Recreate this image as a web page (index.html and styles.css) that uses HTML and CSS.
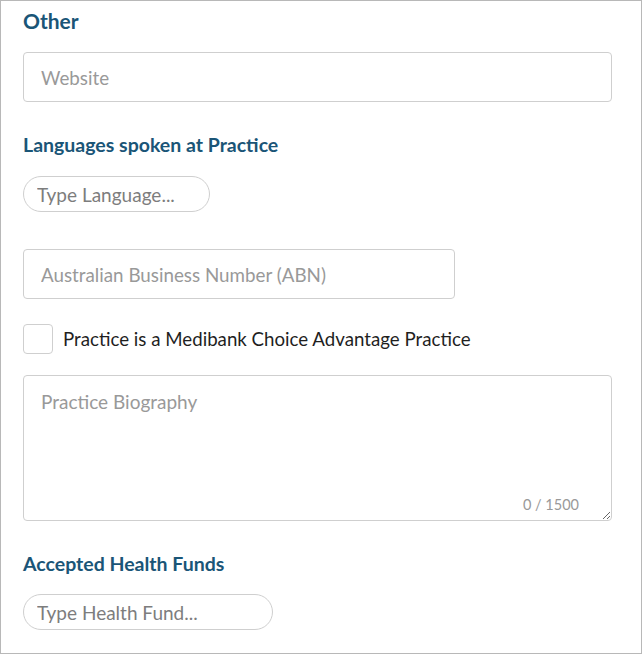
FILE: index.html
```html
<!DOCTYPE html>
<html>
<head>
<meta charset="utf-8">
<link rel="stylesheet" href="styles.css">
</head>
<body>
<div class="panel">
  <h2 class="title">Other</h2>
  <input class="field website" type="text" placeholder="Website">
  <h3 class="section">Languages spoken at Practice</h3>
  <input class="pill lang" type="text" placeholder="Type Language...">
  <input class="field abn" type="text" placeholder="Australian Business Number (ABN)">
  <label class="check">
    <span class="box"></span>
    <span class="check-label">Practice is a Medibank Choice Advantage Practice</span>
  </label>
  <div class="bio-wrap">
    <textarea class="bio" placeholder="Practice Biography"></textarea>
    <span class="counter">0 / 1500</span>
  </div>
  <h3 class="section funds-title">Accepted Health Funds</h3>
  <input class="pill funds" type="text" placeholder="Type Health Fund...">
</div>
</body>
</html>
```
FILE: styles.css
```css
html, body {
  margin: 0;
  padding: 0;
  background: #fff;
}
body {
  font-family: Lato, "Open Sans", sans-serif;
}
.panel {
  box-sizing: border-box;
  width: 642px;
  height: 654px;
  border: 1px solid #b8b8b8;
  padding: 8px 30px 0 22px;
  display: flex;
  flex-direction: column;
  align-items: flex-start;
  overflow: hidden;
}
.title {
  margin: 0;
  font-size: 21px;
  line-height: 24px;
  font-weight: 700;
  color: #1a5577;
}
.section {
  margin: 32px 0 0;
  font-size: 19.5px;
  line-height: 22px;
  font-weight: 700;
  color: #1a5577;
}
.field {
  box-sizing: border-box;
  height: 50px;
  border: 1px solid #cfcfcf;
  border-radius: 4px;
  padding: 0 17px;
  font-family: inherit;
  font-size: 18.8px;
  color: #333;
  outline: none;
  background: #fff;
}
.field::placeholder {
  color: #999;
}
.website {
  width: 589px;
  margin-top: 19px;
}
.pill {
  box-sizing: border-box;
  height: 36px;
  border: 1px solid #cfcfcf;
  border-radius: 18px;
  padding: 0 13px;
  font-family: inherit;
  font-size: 19px;
  color: #333;
  outline: none;
  background: #fff;
}
.pill::placeholder {
  color: #7d7d7d;
}
.lang {
  width: 187px;
  margin-top: 20px;
}
.abn {
  width: 432px;
  margin-top: 37px;
}
.check {
  margin-top: 25px;
  display: flex;
  align-items: center;
  gap: 10px;
}
.box {
  box-sizing: border-box;
  width: 30px;
  height: 30px;
  border: 1px solid #cfcfcf;
  border-radius: 4px;
  background: #fff;
}
.check-label {
  font-size: 18.7px;
  color: #1f1f1f;
}
.bio-wrap {
  position: relative;
  margin-top: 21px;
  width: 589px;
  height: 146px;
}
.bio {
  box-sizing: border-box;
  display: block;
  width: 589px;
  height: 146px;
  margin: 0;
  border: 1px solid #cfcfcf;
  border-radius: 4px;
  padding: 14px 17px;
  font-family: inherit;
  font-size: 19px;
  color: #333;
  outline: none;
  resize: both;
}
.bio::placeholder {
  color: #999;
}
.counter {
  position: absolute;
  right: 33px;
  bottom: 8px;
  font-size: 14.5px;
  color: #999;
}
.funds-title {
  margin-top: 32px;
}
.funds {
  width: 250px;
  margin-top: 19px;
}
```
